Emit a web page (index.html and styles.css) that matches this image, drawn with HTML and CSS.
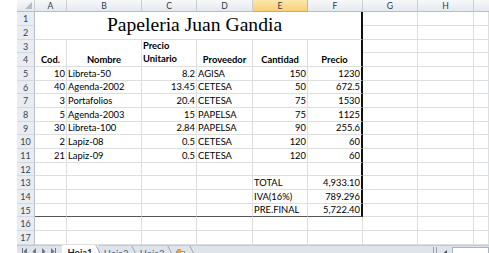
FILE: index.html
```html
<!DOCTYPE html>
<html>
<head>
<meta charset="utf-8">
<title>Papeleria Juan Gandia</title>
<link rel="stylesheet" href="styles.css">
</head>
<body>
<div class="sheet">
  <div class="grid">
    <div class="ch corner"><svg width="7" height="7" viewBox="0 0 7 7"><polygon points="7,0 7,7 0,7" fill="#b4bcc6"/></svg></div>
    <div class="ch">A</div><div class="ch">B</div><div class="ch">C</div><div class="ch">D</div><div class="ch sel">E</div><div class="ch">F</div><div class="ch">G</div><div class="ch">H</div><div class="ch last"></div>

    <div class="rh">1</div><div class="c title rb">Papeleria Juan Gandia</div><div class="c"></div><div class="c"></div><div class="c"></div>
    <div class="rh">2</div><div class="c"></div><div class="c"></div><div class="c"></div>

    <div class="rh">3</div><div class="c m2 b ctr">Cod.</div><div class="c m2 b ctr">Nombre</div><div class="c m2 b wrap">Precio<br>Unitario</div><div class="c m2 b ctr">Proveedor</div><div class="c m2 b ctr">Cantidad</div><div class="c m2 b ctr rb">Precio</div><div class="c"></div><div class="c"></div><div class="c"></div>
    <div class="rh">4</div><div class="c"></div><div class="c"></div><div class="c"></div>

    <div class="rh">5</div><div class="c n">10</div><div class="c">Libreta-50</div><div class="c n">8.2</div><div class="c">AGISA</div><div class="c n">150</div><div class="c n rb">1230</div><div class="c"></div><div class="c"></div><div class="c"></div>
    <div class="rh">6</div><div class="c n">40</div><div class="c">Agenda-2002</div><div class="c n">13.45</div><div class="c">CETESA</div><div class="c n">50</div><div class="c n rb">672.5</div><div class="c"></div><div class="c"></div><div class="c"></div>
    <div class="rh">7</div><div class="c n">3</div><div class="c">Portafolios</div><div class="c n">20.4</div><div class="c">CETESA</div><div class="c n">75</div><div class="c n rb">1530</div><div class="c"></div><div class="c"></div><div class="c"></div>
    <div class="rh">8</div><div class="c n">5</div><div class="c">Agenda-2003</div><div class="c n">15</div><div class="c">PAPELSA</div><div class="c n">75</div><div class="c n rb">1125</div><div class="c"></div><div class="c"></div><div class="c"></div>
    <div class="rh">9</div><div class="c n">30</div><div class="c">Libreta-100</div><div class="c n">2.84</div><div class="c">PAPELSA</div><div class="c n">90</div><div class="c n rb">255.6</div><div class="c"></div><div class="c"></div><div class="c"></div>
    <div class="rh">10</div><div class="c n">2</div><div class="c">Lapiz-08</div><div class="c n">0.5</div><div class="c">CETESA</div><div class="c n">120</div><div class="c n rb">60</div><div class="c"></div><div class="c"></div><div class="c"></div>
    <div class="rh">11</div><div class="c n">21</div><div class="c">Lapiz-09</div><div class="c n">0.5</div><div class="c">CETESA</div><div class="c n">120</div><div class="c n rb">60</div><div class="c"></div><div class="c"></div><div class="c"></div>
    <div class="rh">12</div><div class="c"></div><div class="c"></div><div class="c"></div><div class="c"></div><div class="c"></div><div class="c rb"></div><div class="c"></div><div class="c"></div><div class="c"></div>
    <div class="rh">13</div><div class="c"></div><div class="c"></div><div class="c"></div><div class="c"></div><div class="c">TOTAL</div><div class="c n rb">4,933.10</div><div class="c"></div><div class="c"></div><div class="c"></div>
    <div class="rh">14</div><div class="c"></div><div class="c"></div><div class="c"></div><div class="c"></div><div class="c">IVA(16%)</div><div class="c n rb">789.296</div><div class="c"></div><div class="c"></div><div class="c"></div>
    <div class="rh">15</div><div class="c bb"></div><div class="c bb"></div><div class="c bb"></div><div class="c bb"></div><div class="c bb">PRE.FINAL</div><div class="c n rb bb">5,722.40</div><div class="c"></div><div class="c"></div><div class="c"></div>
    <div class="rh">16</div><div class="c"></div><div class="c"></div><div class="c"></div><div class="c"></div><div class="c"></div><div class="c"></div><div class="c"></div><div class="c"></div><div class="c"></div>
    <div class="rh">17</div><div class="c"></div><div class="c"></div><div class="c"></div><div class="c"></div><div class="c"></div><div class="c"></div><div class="c"></div><div class="c"></div><div class="c"></div>
  </div>

  <div class="tabs">
    <div class="nav">
      <svg width="6" height="7" viewBox="0 0 6 7"><rect x="0" y="0" width="1" height="7" fill="#6b7785"/><polygon points="5,0 5,7 1.5,3.5" fill="#6b7785"/></svg>
      <svg width="5" height="7" viewBox="0 0 5 7"><polygon points="4,0 4,7 0.5,3.5" fill="#6b7785"/></svg>
      <svg width="5" height="7" viewBox="0 0 5 7"><polygon points="1,0 1,7 4.5,3.5" fill="#6b7785"/></svg>
      <svg width="6" height="7" viewBox="0 0 6 7"><polygon points="1,0 1,7 4.5,3.5" fill="#6b7785"/><rect x="5" y="0" width="1" height="7" fill="#6b7785"/></svg>
    </div>
    <div class="tab act">Hoja1</div>
    <div class="tab">Hoja2</div>
    <div class="tab">Hoja3</div>
    <div class="tab ins"><svg width="10" height="9" viewBox="0 0 10 9"><rect x="0.5" y="2.5" width="8" height="6" fill="#fff" stroke="#8a96a6"/><rect x="1" y="0" width="4" height="4" fill="#f0a030"/></svg></div>
    <div class="spacer"></div>
    <div class="split"></div>
    <div class="arr"><svg width="4" height="7" viewBox="0 0 4 7"><polygon points="4,0 4,7 0,3.5" fill="#4a5565"/></svg></div>
    <div class="track"></div>
  </div>
</div>
</body>
</html>
```

FILE: styles.css
```css
* { box-sizing: border-box; margin: 0; padding: 0; }
html, body { width: 489px; height: 253px; overflow: hidden; background: #fff; }
body { font-family: Lato, "Liberation Sans", sans-serif; font-size: 9.4px; color: #000; }

.sheet { padding-left: 17px; display: flex; flex-direction: column; height: 253px; }

.grid {
  display: grid;
  grid-template-columns: 18px 32px 75px 55px 56px 55px 55px 55px 56px 1fr;
  grid-template-rows: 12px repeat(5, 14px 14px 13px) 14px 14px;
}

.ch {
  background: linear-gradient(#f7f8fa, #e5e9ee);
  border-right: 1px solid #c9ced6;
  border-bottom: 1px solid #b6bec8;
  font-family: Lato, "Liberation Sans", sans-serif;
  font-size: 8.6px;
  color: #2e3d52;
  display: flex; align-items: center; justify-content: center;
}
.ch.corner { justify-content: flex-end; align-items: flex-end; padding: 0 2px 2px 0; }
.ch.sel { background: linear-gradient(#fde7ad, #f7cf78); border-right-color: #e0b35e; border-bottom-color: #d9a94f; }
.ch.last { border-right: none; }

.rh {
  background: #e9edf1;
  border-right: 1px solid #b6bec8;
  border-bottom: 1px solid #d3d9e0;
  font-size: 9px;
  color: #34445a;
  display: flex; align-items: center; justify-content: center;
}

.c {
  border-right: 1px solid #dcdee0;
  border-bottom: 1px solid #dcdee0;
  display: flex; align-items: flex-end;
  padding: 0 1px 1px 1px;
  white-space: nowrap; overflow: hidden;
  line-height: 11px;
}
.n { justify-content: flex-end; padding-right: 1px; }
.b { font-weight: bold; }
.ctr { justify-content: center; }
.m2 { grid-row: span 2; }
.wrap { white-space: normal; line-height: 13.7px; padding-bottom: 0; }

.title {
  grid-column: span 6; grid-row: span 2;
  justify-content: center;
  font-family: "Liberation Serif", serif;
  font-size: 19.6px; line-height: 22px;
  padding-bottom: 3px; padding-right: 8px;
}

.rb { border-right: 2px solid #111; }
.bb { border-bottom: 1px solid #555; }

.tabs {
  display: flex; align-items: flex-start;
  height: 18px; flex: none;
  background: #dfe4ea;
  border-top: 1px solid #c3cad3;
  font-size: 9.4px;
}
.nav { width: 45px; display: flex; gap: 4px; padding: 2px 0 0 5px; }
.tab {
  position: relative;
  width: 36px; height: 14px;
  display: flex; justify-content: center; align-items: center;
  color: #3d5a80;
}
.tab::after {
  content: ""; position: absolute; right: -2px; top: 0; height: 14px;
  border-right: 1px solid #9aa6b5; transform: skewX(28deg);
}
.tab.act { background: #fff; color: #1a2433; font-weight: bold; margin-top: -1px; }
.tab.ins { width: 22px; }
.spacer { flex: 1; }
.split { width: 4px; height: 8px; margin: 1px 6px 0 0; border-left: 1px solid #9aa3af; border-right: 1px solid #9aa3af; }
.arr { width: 9px; padding-top: 2px; }
.track { width: 37px; height: 14px; background: #fff; border: 1px solid #a9b2be; margin-top: 1px; }
```
